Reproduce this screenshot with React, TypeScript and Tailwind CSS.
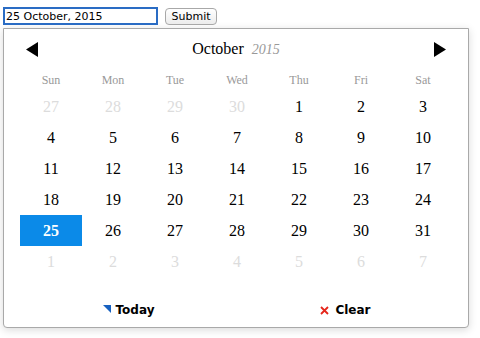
const DAYS = ['Sun', 'Mon', 'Tue', 'Wed', 'Thu', 'Fri', 'Sat']

type Cell = { day: number; muted?: boolean; selected?: boolean }

function buildCells(): Cell[] {
    const cells: Cell[] = []
    for (let d = 27; d <= 30; d++) cells.push({ day: d, muted: true })
    for (let d = 1; d <= 31; d++) cells.push({ day: d, selected: d === 25 })
    for (let d = 1; d <= 7; d++) cells.push({ day: d, muted: true })
    return cells
}

export default function App() {
    const cells = buildCells()

    return (
        <div className="min-h-[338px] w-[480px] bg-white">
            {/* input row */}
            <div className="flex items-start pl-[3px] pt-[7px]">
                <input
                    readOnly
                    value="25 October, 2015"
                    className="h-[18px] w-[155px] border-2 border-[#2a6cc4] bg-white px-[1px] text-[11px] leading-none text-black outline-none"
                    style={{ fontFamily: '"DejaVu Sans", sans-serif' }}
                />
                <button
                    className="ml-[7px] mt-[1px] h-[17px] w-[52px] rounded-[4px] border border-[#a8a8a8] bg-gradient-to-b from-white to-[#ececec] text-[11px] leading-none text-black"
                    style={{ fontFamily: '"DejaVu Sans", sans-serif' }}
                >
                    Submit
                </button>
            </div>

            {/* picker */}
            <div className="ml-[3px] mt-[3px] h-[300px] w-[466px] rounded-b-[4px] border border-[#a9a9a9] bg-white pl-[16px] pr-[14px] shadow-[0_2px_8px_rgba(0,0,0,0.15)] [font-family:'Liberation_Serif',serif]">
                <div className="flex h-[40px] items-center px-[6px]">
                    <svg width="12" height="15" viewBox="0 0 12 15">
                        <path d="M12 0 L12 15 L0 7.5 Z" fill="#000" />
                    </svg>
                    <div className="flex flex-1 items-baseline justify-center pb-[1px]">
                        <span className="text-[16px] text-black">October</span>
                        <span className="ml-[8px] text-[14px] italic text-[#999]">2015</span>
                    </div>
                    <svg width="12" height="15" viewBox="0 0 12 15" className="mr-[2px]">
                        <path d="M0 0 L0 15 L12 7.5 Z" fill="#000" />
                    </svg>
                </div>

                <div className="grid h-[22px] grid-cols-7 items-center text-center text-[12px] text-[#999]">
                    {DAYS.map((d) => (
                        <div key={d}>{d}</div>
                    ))}
                </div>

                <div className="grid grid-cols-7">
                    {cells.map((c, i) => (
                        <div
                            key={i}
                            className={`flex h-[31px] items-center justify-center text-[16px] ${
                                c.selected
                                    ? 'bg-[#0b8ae8] font-bold text-white'
                                    : c.muted
                                        ? 'text-[#dcdcdc]'
                                        : 'text-black'
                            }`}
                        >
                            {c.day}
                        </div>
                    ))}
                </div>

                <div
                    className="mt-[23px] grid h-[20px] grid-cols-2 items-center text-[12px] font-bold text-black"
                    style={{ fontFamily: '"DejaVu Sans", sans-serif' }}
                >
                    <div className="flex items-center justify-center">
                        <svg width="8" height="8" viewBox="0 0 8 8" className="mr-[5px] mt-[-2px]">
                            <path d="M0 0 L8 0 L8 8 Z" fill="#1761c0" />
                        </svg>
                        Today
                    </div>
                    <div className="flex items-center justify-center">
                        <svg width="9" height="9" viewBox="0 0 9 9" className="mr-[6px]">
                            <path d="M1 1 L8 8 M8 1 L1 8" stroke="#e5261b" strokeWidth="1.8" />
                        </svg>
                        Clear
                    </div>
                </div>
            </div>
        </div>
    )
}
